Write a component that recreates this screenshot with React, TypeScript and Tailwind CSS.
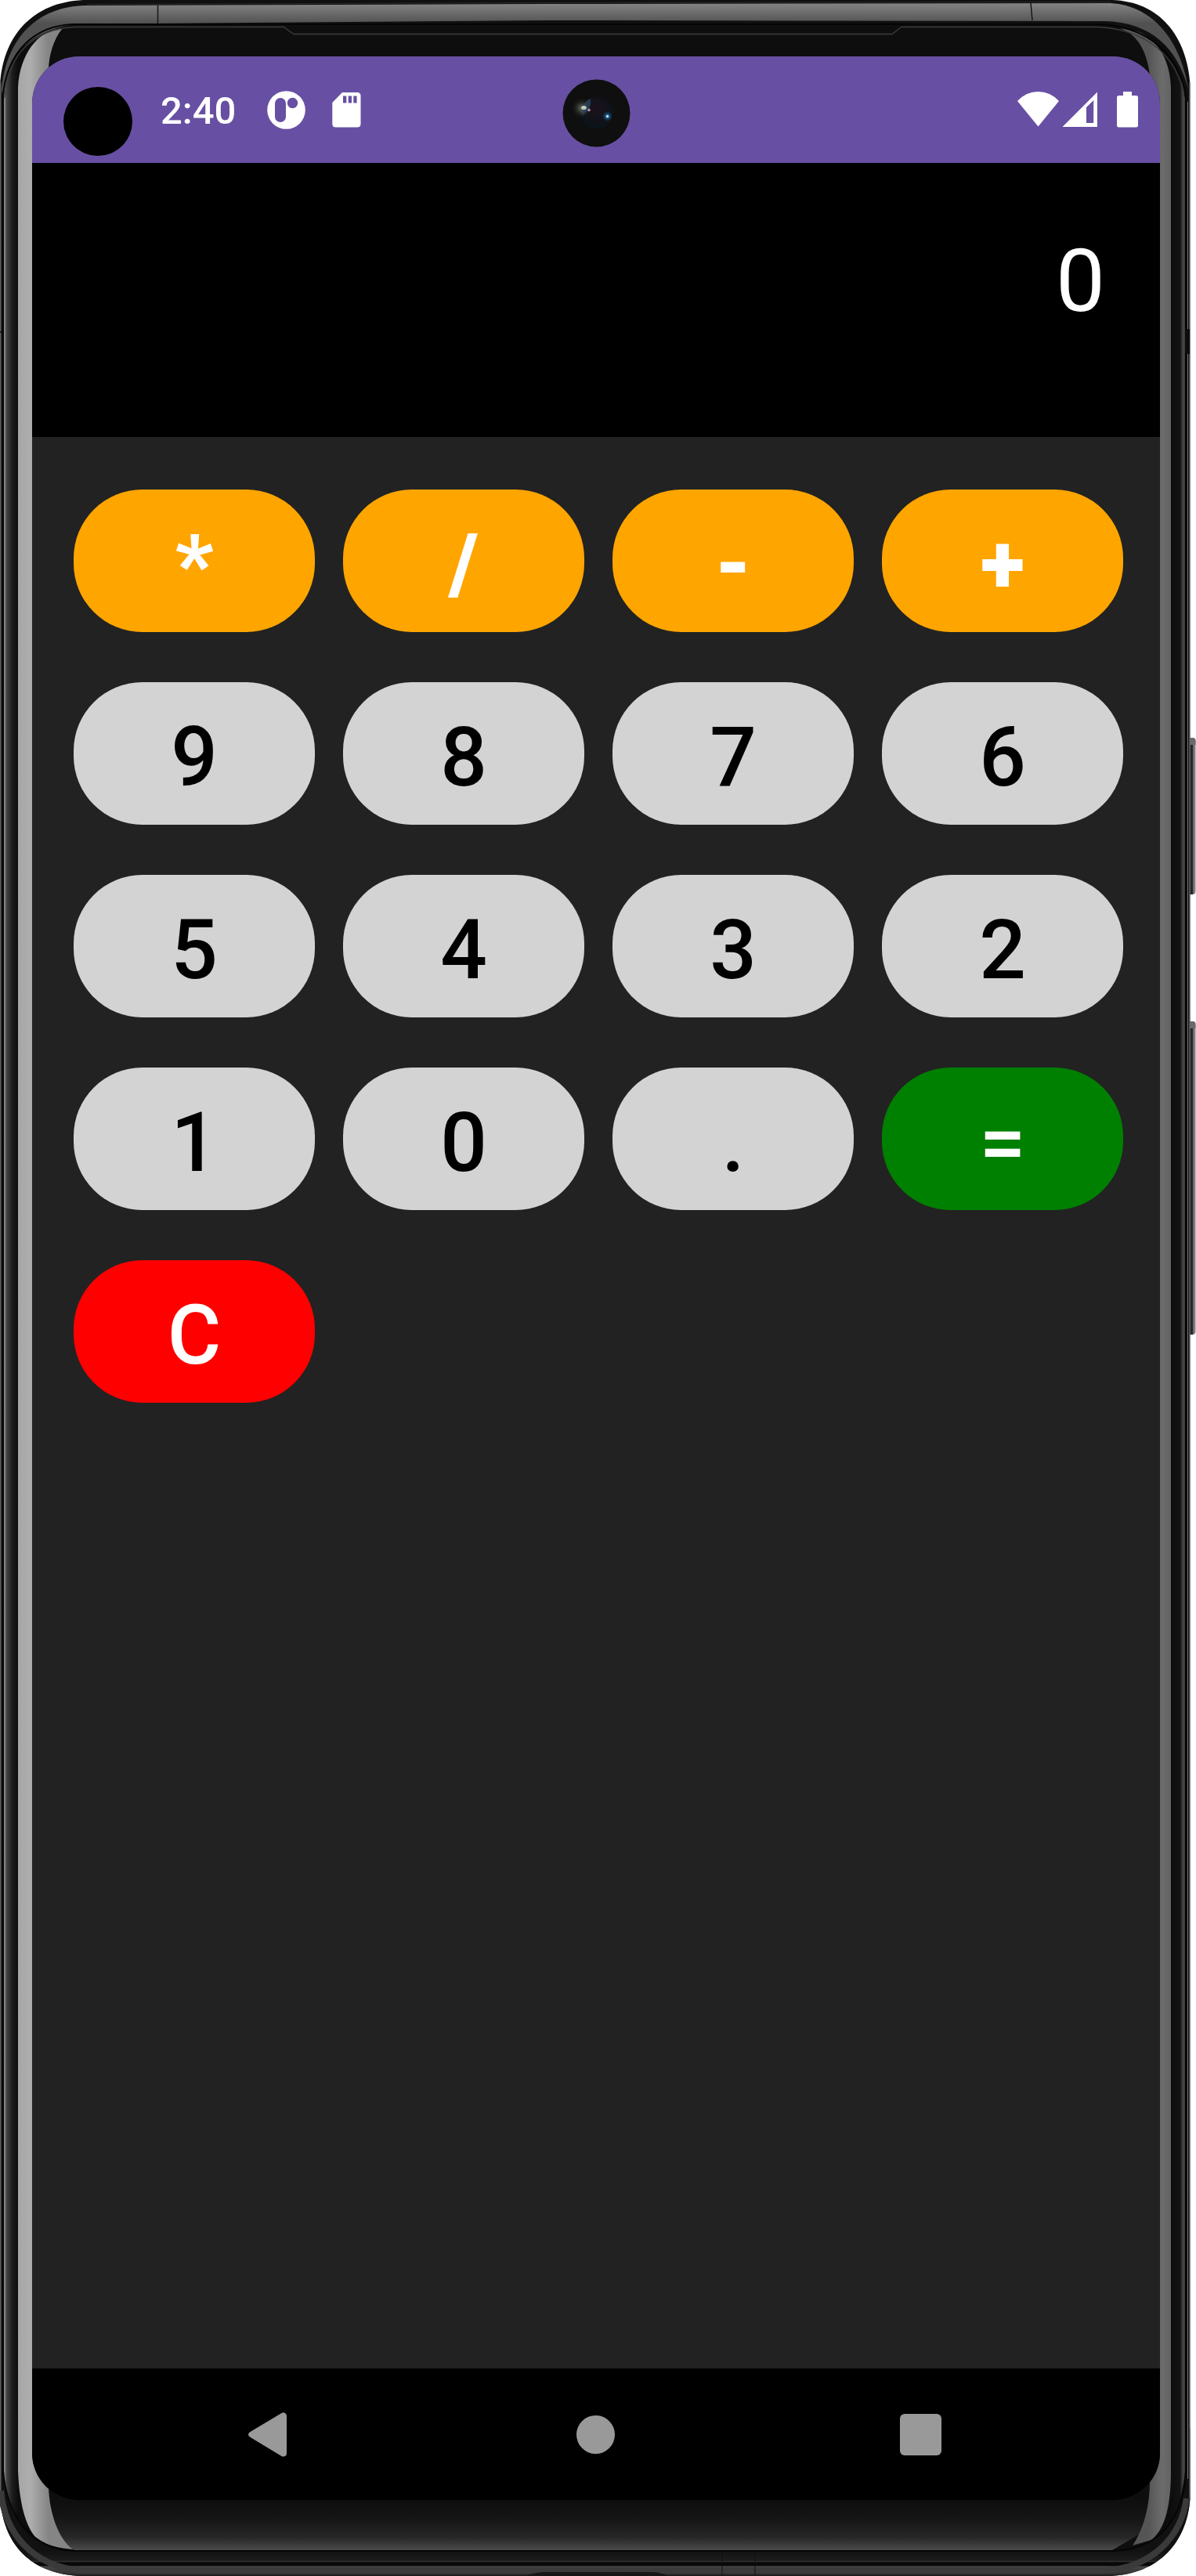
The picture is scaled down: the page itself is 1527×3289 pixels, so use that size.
import React from "react";

type Tone = "orange" | "gray" | "green" | "red";

const TONES: Record<Tone, string> = {
  orange: "bg-[#ffa500] text-white font-black",
  gray: "bg-[#d3d3d3] text-black font-medium",
  green: "bg-[#008000] text-white font-medium",
  red: "bg-[#ff0000] text-white font-medium",
};

const KEYS: [string, Tone][] = [
  ["*", "orange"], ["/", "orange"], ["-", "orange"], ["+", "orange"],
  ["9", "gray"], ["8", "gray"], ["7", "gray"], ["6", "gray"],
  ["5", "gray"], ["4", "gray"], ["3", "gray"], ["2", "gray"],
  ["1", "gray"], ["0", "gray"], [".", "gray"], ["=", "green"],
  ["C", "red"],
];

/** Phone body: side buttons, metal band, curved glass edges. */
function DeviceFrame() {
  return (
    <svg className="absolute inset-0" width="1527" height="3289" viewBox="0 0 1527 3289" fill="none">
      <defs>
        <linearGradient id="band" gradientUnits="userSpaceOnUse" x1="0" y1="6" x2="0" y2="30">
          <stop offset="0" stopColor="#808080" />
          <stop offset="1" stopColor="#515151" />
        </linearGradient>
        <linearGradient id="leftGlass" gradientUnits="userSpaceOnUse" x1="5" y1="0" x2="23" y2="0">
          <stop offset="0" stopColor="#8a8a8a" />
          <stop offset="0.1" stopColor="#777777" />
          <stop offset="0.16" stopColor="#484848" />
          <stop offset="0.6" stopColor="#1c1c1c" />
          <stop offset="1" stopColor="#0d0d0d" />
        </linearGradient>
        <linearGradient id="leftShine" gradientUnits="userSpaceOnUse" x1="23" y1="0" x2="62" y2="0">
          <stop offset="0" stopColor="#a6a6a6" />
          <stop offset="0.4" stopColor="#aeaeae" />
          <stop offset="1" stopColor="#858585" />
        </linearGradient>
        <linearGradient id="rightShine" gradientUnits="userSpaceOnUse" x1="1466" y1="0" x2="1496" y2="0">
          <stop offset="0" stopColor="#555555" />
          <stop offset="0.6" stopColor="#6c6c6c" />
          <stop offset="1" stopColor="#626262" />
        </linearGradient>
        <linearGradient id="rightGlass" gradientUnits="userSpaceOnUse" x1="1495" y1="0" x2="1513" y2="0">
          <stop offset="0" stopColor="#0d0d0d" />
          <stop offset="0.65" stopColor="#131313" />
          <stop offset="0.8" stopColor="#3a3a3a" />
          <stop offset="0.95" stopColor="#505050" />
          <stop offset="1" stopColor="#222222" />
        </linearGradient>
        <linearGradient id="chin" gradientUnits="userSpaceOnUse" x1="0" y1="3192" x2="0" y2="3256">
          <stop offset="0" stopColor="#0e0e0e" />
          <stop offset="0.35" stopColor="#141414" />
          <stop offset="0.75" stopColor="#272727" />
          <stop offset="1" stopColor="#4b4b4b" />
        </linearGradient>
        <linearGradient id="lowerBand" gradientUnits="userSpaceOnUse" x1="0" y1="3256" x2="0" y2="3289">
          <stop offset="0" stopColor="#111111" />
          <stop offset="0.4" stopColor="#1c1c1c" />
          <stop offset="0.44" stopColor="#303030" />
          <stop offset="0.48" stopColor="#080808" />
          <stop offset="0.6" stopColor="#0a0a0a" />
          <stop offset="0.63" stopColor="#464646" />
          <stop offset="0.9" stopColor="#333333" />
          <stop offset="1" stopColor="#181818" />
        </linearGradient>
        <linearGradient id="sideKey" gradientUnits="userSpaceOnUse" x1="1518" y1="0" x2="1527" y2="0">
          <stop offset="0" stopColor="#1d1d1d" />
          <stop offset="0.5" stopColor="#2c2c2c" />
          <stop offset="0.65" stopColor="#777777" />
          <stop offset="1" stopColor="#888888" />
        </linearGradient>
      </defs>

      <rect x="1514" y="942" width="12.5" height="200" rx="4" fill="url(#sideKey)" />
      <rect x="1514" y="1304" width="12.5" height="400" rx="4" fill="url(#sideKey)" />
      <path d="M1518 942h5q3.500 0 3.500 5v4h-8.500zM1518 1304h5q3.500 0 3.500 5v4h-8.500z" fill="#6a6a6a" />

      <path d="M0 108C4 40 48 0 112 0H1420C1480 2 1515 45 1519.500 108V3190C1515 3250 1475 3289 1412 3289H104C40 3287 4 3250 0 3188Z" fill="#101010" />
      <path d="M0 3100V3188C4 3250 40 3287 104 3289H1412C1475 3289 1515 3250 1519.500 3190V3100Z" fill="url(#lowerBand)" />
      <path d="M1 3180C6 3235 42 3277 104 3282H1412C1470 3278 1508 3240 1515 3190" stroke="#3a3a3a" strokeWidth="8" />
      <path d="M0.750 105V3180" stroke="#5f5f5f" strokeWidth="1.500" />
      <path d="M1519 105V3190" stroke="#8d8d8d" />

      <path d="M2 115C8 48 48 8 110 7L700 5L1418 4C1472 7 1508 52 1517.500 115C1504 62 1470 28 1410 27L700 26L200 30H105C45 34 12 68 4 125Z" fill="url(#band)" />
      <path d="M112 5.500L700 3.500L1418 2.500" stroke="#2c2c2c" />
      <path d="M201.500 7V30M1316 4L1318 26" stroke="#161616" strokeWidth="1.500" />

      <path d="M5 125C9 64 45 36 95 34H1400C1465 36 1505 70 1513 125V3160C1508 3220 1475 3255 1420 3256H95C45 3253 9 3215 5 3155Z" fill="#0e0e0e" />
      <path d="M50 3160H1470L1490 3215L1420 3256H95L60 3240Z" fill="url(#chin)" />
      <path d="M5 125C8 78 28 52 60 43C36 56 24 80 23 112V3155C25 3200 34 3232 52 3246C25 3236 7 3200 5 3155Z" fill="url(#leftGlass)" />
      <path d="M1513 125C1508 78 1492 52 1462 43C1484 56 1494 80 1495 112V3155C1494 3195 1488 3230 1470 3243C1492 3235 1508 3205 1513 3155Z" fill="url(#rightGlass)" />
      <path d="M80 36C48 38 25 70 23 112V3155C25 3200 34 3232 52 3246Q70 3253 93 3255C74 3241 63 3208 62 3175V90C62 72 68 50 80 36Z" fill="url(#leftShine)" />
      <path d="M1430 36Q1445 38 1455 41C1482 55 1494 80 1495 112V3155C1495 3195 1489 3228 1470 3243L1446 3250C1460 3230 1468 3200 1468 3168V95C1465 72 1456 45 1430 36Z" fill="url(#rightShine)" />

      <path d="M6 125C10 66 46 37 95 34.500H362L375 43.500H1139L1151 34.500H1400C1464 37 1504 72 1512 125" stroke="#3c3c3c" strokeWidth="1.300" />
      <path d="M3.500 3150V125C8 66 44 32 95 31H1400C1466 32 1508 72 1514 125V3160C1509 3222 1475 3256 1420 3257H95C44 3255 8 3218 3.500 3150" stroke="#050505" strokeWidth="2" />
      <path d="M1516.500 130V3165" stroke="#777777" />
      <path d="M0 424H5M1513 421h6" stroke="#080808" strokeWidth="1.500" />
      <rect x="1513" y="421" width="6" height="31" fill="#0d0d0d" />
      <path d="M922 3257V3288M964 3257V3288" stroke="#101010" />
      <path d="M674 3288Q685 3284 695 3284H832Q842 3284 850 3288V3289H674Z" fill="#161616" />
    </svg>
  );
}

function StatusBar() {
  return (
    <header className="relative flex h-[136px] shrink-0 items-start bg-[#6750a3]">
      <span className="ml-10 mt-[39px] size-22 rounded-full bg-black" />
      <span className="ml-[36px] mt-[41px] w-[98px] text-[49px] leading-[58px] font-medium text-white">2:40</span>
      <svg className="ml-[38px] mt-[44px]" width="49" height="49" viewBox="0 0 49 49">
        <circle cx="24.500" cy="24.500" r="24.300" fill="white" />
        <rect x="10" y="9" width="14" height="31" rx="7" fill="#6750a3" />
        <circle cx="32.500" cy="15.500" r="6.700" fill="#6750a3" />
      </svg>
      <svg className="ml-[34px] mt-[46px]" width="37" height="45" viewBox="0 0 37 45">
        <path d="M13 0H32Q36.500 0 36.500 4.500V40Q36.500 44.500 32 44.500H4.500Q0.300 44.500 0.300 40V13Z" fill="white" />
        <path d="M14 4.500h4.300v9H14zM20.700 4.500H25v9h-4.300zM27.300 4.500h4.300v9h-4.300z" fill="#6750a3" />
      </svg>
      <div className="ml-auto mr-[28px] mt-[45px] flex">
        <svg width="53" height="45" viewBox="0 0 53 45">
          <path d="M0 12Q11 0 26.500 0T53 12L26.500 44.500Z" fill="white" />
        </svg>
        <svg className="ml-1" width="46" height="45" viewBox="0 0 46 45">
          <path fillRule="evenodd" d="M45 0.500V45H0.500ZM31 20V40H40.200V11Z" fill="white" />
        </svg>
        <svg className="ml-[24px]" width="27" height="46" viewBox="0 0 27 46">
          <path d="M8 0H19V5H24.500Q27 5 27 7.500V43Q27 45.500 24.500 45.500H2.500Q0 45.500 0 43V7.500Q0 5 2.500 5H8Z" fill="white" />
        </svg>
      </div>
      {/* Front camera over the bar */}
      <svg className="absolute left-[677px] top-[29px]" width="87" height="87" viewBox="0 0 87 87">
        <defs>
          <radialGradient id="halo">
            <stop offset="0" stopColor="#6c7565" />
            <stop offset="0.5" stopColor="#2b2f29" stopOpacity="0.8" />
            <stop offset="1" stopColor="#0f0f0f" stopOpacity="0" />
          </radialGradient>
          <radialGradient id="lens" cx="0.5" cy="0.4">
            <stop offset="0" stopColor="#1b131c" />
            <stop offset="0.75" stopColor="#12111a" />
            <stop offset="1" stopColor="#0b141a" />
          </radialGradient>
          <radialGradient id="blue">
            <stop offset="0" stopColor="#8fc8ee" />
            <stop offset="0.3" stopColor="#1d5f8e" />
            <stop offset="1" stopColor="#12293f" stopOpacity="0" />
          </radialGradient>
        </defs>
        <circle cx="43.500" cy="43.500" r="43" fill="#0f0f0f" />
        <circle cx="44" cy="43" r="20.500" fill="url(#lens)" />
        <circle cx="25" cy="37" r="14" fill="url(#halo)" />
        <path d="M25 40Q27 28 36 25Q38 38 25 46Z" fill="#2b4c68" opacity="0.7" />
        <ellipse cx="27.500" cy="36.500" rx="3.300" ry="2.500" fill="#c5cbbf" />
        <circle cx="34" cy="39.500" r="1.800" fill="#b48fb8" />
        <circle cx="57.500" cy="47.500" r="7" fill="url(#blue)" />
        <circle cx="57.500" cy="47.500" r="1.500" fill="#c8ecff" />
      </svg>
    </header>
  );
}

function NavBar() {
  return (
    <nav className="flex h-[168px] shrink-0 items-center bg-black">
      <svg className="ml-[276px]" width="49" height="57" viewBox="0 0 49 57">
        <path d="M42.500 0.900Q45 -0.300 47 0.900Q49 2 49 4.500V52.500Q49 55 47 56Q45 57 42.500 55.900L2 31.500Q0 30 0 28.300T2 25.200Z" fill="#999999" />
      </svg>
      <span className="ml-[370px] size-[49px] rounded-full bg-[#999999]" />
      <span className="ml-[364px] size-[53px] rounded-[6px] bg-[#999999]" />
    </nav>
  );
}

export default function App() {
  return (
    <div className="relative h-[3289px] w-[1527px] overflow-hidden bg-white font-['Roboto',sans-serif]">
      <DeviceFrame />
      <div className="relative pl-[41px] pt-[72px]">
        <main className="flex h-[3120px] w-[1440px] flex-col overflow-hidden rounded-[60px] bg-[#222222]">
          <StatusBar />
          <section className="h-[350px] shrink-0 bg-black px-[70px] pt-[85px] text-right text-[112px] leading-[131px] text-white">
            0
          </section>
          <section className="grid flex-1 grid-cols-[repeat(4,308px)] content-start gap-x-9 gap-y-16 pl-[53px] pt-[67px]">
            {KEYS.map(([label, tone]) => (
              <button
                key={label}
                className={`flex h-[182px] items-center justify-center rounded-[87.5px] pt-[11px] text-[105px] leading-none ${TONES[tone]}`}
              >
                {label}
              </button>
            ))}
          </section>
          <NavBar />
        </main>
      </div>
    </div>
  );
}
